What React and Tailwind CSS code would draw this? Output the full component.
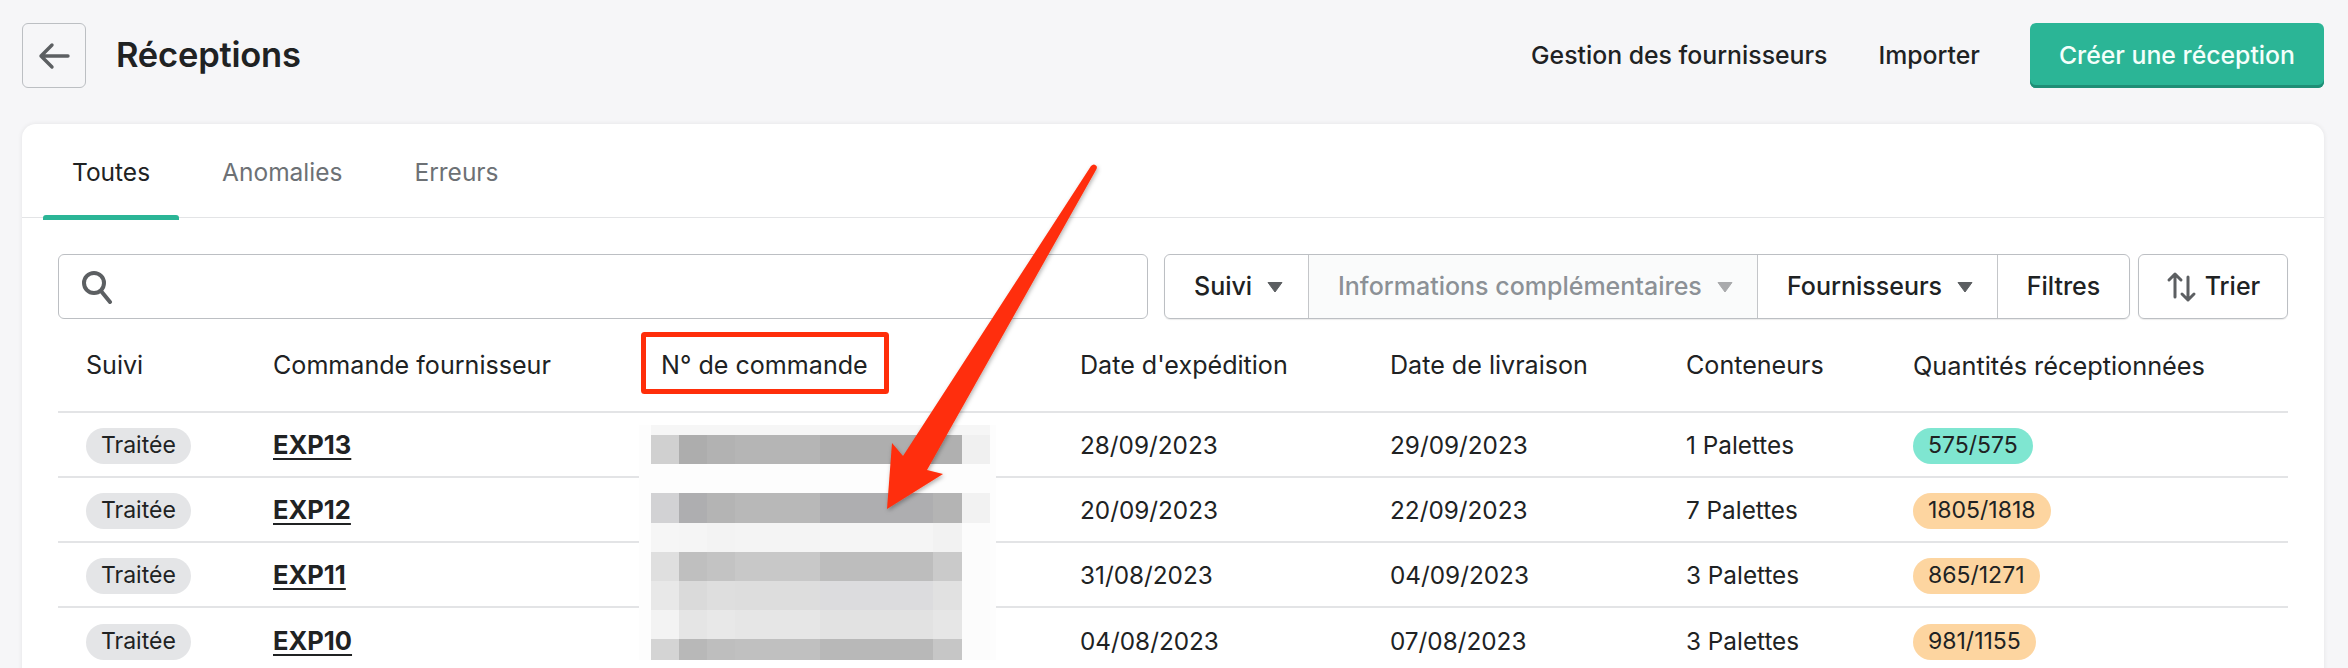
const rows = [
  ["EXP13", "28/09/2023", "29/09/2023", "1 Palettes", "575/575", "bg-[#7fe6d1]"],
  ["EXP12", "20/09/2023", "22/09/2023", "7 Palettes", "1805/1818", "bg-[#fdd5a0]"],
  ["EXP11", "31/08/2023", "04/09/2023", "3 Palettes", "865/1271", "bg-[#fdd5a0]"],
  ["EXP10", "04/08/2023", "07/08/2023", "3 Palettes", "981/1155", "bg-[#fdd5a0]"],
];

const columnsX = [651, 679, 707, 735, 820, 933, 962, 990];
const blurRows = [
  [435, 464, ["#d0d0d0", "#adadad", "#b2b2b2", "#b5b5b5", "#aeaeae", "#b0b0b0", "#f0f0f0"]],
  [493, 523, ["#d2d2d4", "#aeaeb0", "#b4b4b4", "#b8b8b8", "#aeaeb0", "#b4b4b4", "#f2f2f2"]],
  [523, 552, ["#f6f6f6", "#f5f5f5", "#f3f3f3", "#f4f4f4", "#f5f5f5", "#f2f2f2", "#fcfcfc"]],
  [552, 581, ["#dfdfdf", "#bfbfbf", "#c3c3c3", "#c8c8c8", "#bdbdbd", "#cacaca", "#fcfcfc"]],
  [581, 610, ["#e8e8e8", "#dadada", "#dedede", "#dddddd", "#dcdcde", "#e1e1e1", "#fcfcfc"]],
  [610, 639, ["#f3f3f3", "#e5e5e5", "#e8e8e8", "#e6e6e6", "#e2e2e2", "#e6e6e6", "#fcfcfc"]],
  [639, 660, ["#d4d4d4", "#b8b8b8", "#bebebe", "#c0c0c0", "#b8b8b8", "#c6c6c6", "#fcfcfc"]],
];

function Caret({ light }) {
  return (
    <svg width="16" height="12" viewBox="0 0 16 12" className="ml-[15px] shrink-0">
      <path d="M1 1.500h14L8 11z" fill={light ? "#a9aaac" : "#5c5f62"} stroke={light ? "#a9aaac" : "#5c5f62"} strokeLinejoin="round" />
    </svg>
  );
}

const grid = "grid grid-cols-[187px_389px_418px_310px_296px_227px_1fr] items-center";

export default function App() {
  return (
    <div className="relative h-[668px] overflow-hidden bg-[#f6f6f8] font-['Inter',sans-serif] text-[#202223]">
      <header className="flex h-[124px] items-start pl-[22px] pr-[24px] pt-[23px]">
        <button className="flex h-[65px] w-[64px] items-center justify-center rounded-[6px] border border-[#bcbfc3]">
          <svg width="32" height="28" viewBox="0 0 32 28" fill="none" stroke="#5c5f62" strokeWidth="3.4" strokeLinecap="round" strokeLinejoin="round">
            <path d="M30 14H3M14 3 3 14l11 11" />
          </svg>
        </button>
        <h1 className="ml-[30px] mt-[11px] text-[34.500px] font-semibold leading-[42px] tracking-[-0.2px]">Réceptions</h1>
        <div className="ml-auto flex items-center">
          <span className="text-[24.800px] font-medium leading-[65px]">Gestion des fournisseurs</span>
          <span className="ml-[51px] text-[24.800px] font-medium leading-[65px]">Importer</span>
          <button className="ml-[50px] h-[65px] rounded-[6px] bg-[#2bb596] px-[29px] text-[24.800px] font-medium text-[#f4fffb] shadow-[inset_0_-3px_0_#1f8e76]">Créer une réception</button>
        </div>
      </header>

      <main className="mx-[24px] ml-[22px] h-[600px] rounded-t-[14px] bg-white shadow-[0_0_5px_rgba(0,0,0,0.08)]">
        <nav className="flex h-[94px] gap-[14px] border-b border-[#e3e4e6] pl-[21px]">
          <div className="relative flex h-[94px] items-center px-[29px] pt-[2px] text-[24.500px]">
            Toutes
            <span className="absolute inset-x-0 bottom-[-2px] h-[5px] rounded-t-[3px] bg-[#2bb596]" />
          </div>
          <div className="flex h-[94px] items-center px-[29px] pt-[2px] text-[24.500px] text-[#6d7175]">Anomalies</div>
          <div className="flex h-[94px] items-center px-[29px] pt-[2px] text-[24.500px] text-[#6d7175]">Erreurs</div>
        </nav>

        <div className="px-[36px] pt-[36px]">
          <div className="flex h-[65px]">
            <div className="flex w-[1090px] items-center rounded-[6px] border border-[#bcbfc3] pl-[22px]">
              <svg width="32" height="34" viewBox="0 0 32 34" fill="none" stroke="#5c5f62" strokeWidth="4">
                <circle cx="13" cy="13" r="10" />
                <path d="m20 21 9 11" strokeLinecap="round" />
              </svg>
            </div>
            <div className="ml-[16px] flex w-[966px] rounded-[6px] border border-[#bcbfc3] text-[25px] font-medium shadow-[0_1px_1px_rgba(0,0,0,0.08)]">
              <div className="flex w-[143px] items-center pl-[29px]">Suivi<Caret /></div>
              <div className="flex w-[449px] items-center border-l border-[#c4c6c9] bg-[#fafbfb] pl-[29px] text-[#8c9196]">Informations complémentaires<Caret light /></div>
              <div className="flex w-[240px] items-center border-l border-[#c4c6c9] pl-[29px]">Fournisseurs<Caret /></div>
              <div className="flex flex-1 items-center justify-center border-l border-[#c4c6c9]">Filtres</div>
            </div>
            <div className="ml-[8px] flex w-[150px] items-center justify-center rounded-[6px] border border-[#bcbfc3] text-[25px] font-medium shadow-[0_1px_1px_rgba(0,0,0,0.08)]">
              <svg width="32" height="34" viewBox="0 0 32 34" fill="none" stroke="#5c5f62" strokeWidth="3" strokeLinecap="round" strokeLinejoin="round" className="mr-[7px]">
                <path d="M9 27V4M3 10l6-6 6 6M22 7v23M16 24l6 6 6-6" />
              </svg>
              Trier
            </div>
          </div>

          <div className={`${grid} h-[94px] border-b-2 border-[#e3e4e6] pt-[2px] text-[25.100px]`}>
            <span className="pl-[28px]">Suivi</span>
            <span className="pl-[28px]">Commande fournisseur</span>
            <span className="pl-[27px]">N° de commande</span>
            <span className="pl-[28px]">Date d'expédition</span>
            <span className="pl-[28px]">Date de livraison</span>
            <span className="pl-[28px]">Conteneurs</span>
            <span className="pl-[28px] text-[25.300px]">Quantités réceptionnées</span>
          </div>

          {rows.map((r) => (
            <div key={r[0]} className={`${grid} h-[65px] border-b-2 border-[#e3e4e6] pt-[1px] text-[24.300px] last:border-b-0`}>
              <div className="pl-[28px]">
                <span className="inline-flex h-[36px] items-center rounded-full bg-[#e4e5e7] px-[15px] text-[23px]">Traitée</span>
              </div>
              <a className="pl-[28px] text-[25.500px] font-bold underline underline-offset-4">{r[0]}</a>
              <span />
              <span className="pl-[28px]">{r[1]}</span>
              <span className="pl-[28px]">{r[2]}</span>
              <span className="pl-[28px]">{r[3]}</span>
              <div className="pl-[28px]">
                <span className={`inline-flex h-[36px] items-center rounded-full px-[15px] text-[23px] ${r[5]}`}>{r[4]}</span>
              </div>
            </div>
          ))}
        </div>
      </main>

      <svg width="2348" height="668" className="pointer-events-none absolute inset-0">
        <defs>
          <filter id="arrowShadow" x="-10%" y="-10%" width="120%" height="120%">
            <feDropShadow dx="1" dy="2" stdDeviation="2" floodOpacity="0.3" />
          </filter>
        </defs>
        <rect x="639" y="425" width="357" height="235" fill="#fdfdfd" />
        <rect x="651" y="425" width="339" height="10" fill="#f6f6f6" />
        {blurRows.map(([y0, y1, colors]) =>
          colors.map((c, i) => (
            <rect key={`${y0}-${i}`} x={columnsX[i]} y={y0} width={columnsX[i + 1] - columnsX[i]} height={y1 - y0} fill={c} />
          ))
        )}
        <rect x="643.500" y="334.500" width="243" height="57" fill="none" stroke="#ff2e0a" strokeWidth="5" rx="1" />
        <path
          d="M1091 166Q1094 163 1096.500 166Q1097.500 168 1096 170L927 470 943 474 887 509 892 443 903 456Z"
          fill="#ff2e0a"
          filter="url(#arrowShadow)"
        />
      </svg>
    </div>
  );
}
